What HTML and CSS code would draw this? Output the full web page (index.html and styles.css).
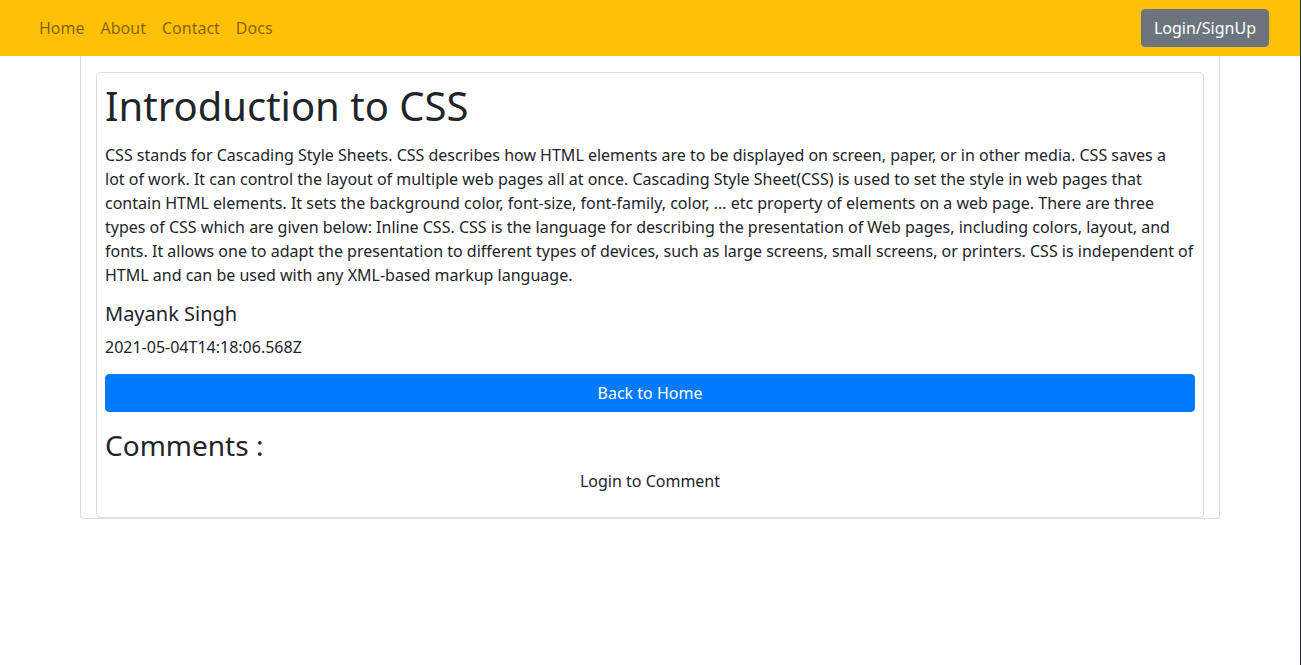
FILE: index.html
```html
<!DOCTYPE html>
<html lang="en">
<head>
<meta charset="utf-8">
<title>Introduction to CSS</title>
<link rel="stylesheet" href="styles.css">
</head>
<body>
<nav class="navbar">
  <ul class="nav-links">
    <li><a href="#">Home</a></li>
    <li><a href="#">About</a></li>
    <li><a href="#">Contact</a></li>
    <li><a href="#">Docs</a></li>
  </ul>
  <button class="btn-login">Login/SignUp</button>
</nav>
<main class="container">
  <article class="card">
    <h1 class="title">Introduction to CSS</h1>
    <p class="desc">CSS stands for Cascading Style Sheets. CSS describes how HTML elements are to be displayed on screen, paper, or in other media. CSS saves a<br>lot of work. It can control the layout of multiple web pages all at once. Cascading Style Sheet(CSS) is used to set the style in web pages that<br>contain HTML elements. It sets the background color, font-size, font-family, color, … etc property of elements on a web page. There are three<br>types of CSS which are given below: Inline CSS. CSS is the language for describing the presentation of Web pages, including colors, layout, and<br>fonts. It allows one to adapt the presentation to different types of devices, such as large screens, small screens, or printers. CSS is independent of<br>HTML and can be used with any XML-based markup language.</p>
    <h5 class="author">Mayank Singh</h5>
    <p class="date">2021-05-04T14:18:06.568Z</p>
    <a class="btn-home" href="#">Back to Home</a>
    <h3 class="comments">Comments :</h3>
    <p class="login-note">Login to Comment</p>
  </article>
</main>
</body>
</html>
```

FILE: styles.css
```css
html {
  border-right: 1px solid #2a2d33;
  background: #fff;
  box-sizing: border-box;
  min-height: 100%;
}
body {
  margin: 0;
  font-family: "Noto Sans", sans-serif;
  font-size: 16px;
  line-height: 1.5;
  color: #212529;
}
.navbar {
  background: #ffc107;
  height: 56px;
  box-sizing: border-box;
  padding: 0 31px 0 31px;
  display: flex;
  align-items: center;
  justify-content: space-between;
}
.nav-links {
  list-style: none;
  margin: 0;
  padding: 0;
  display: flex;
}
.nav-links a {
  display: block;
  padding: 8px;
  color: rgba(0, 0, 0, 0.5);
  text-decoration: none;
}
.btn-login {
  font: inherit;
  color: #fff;
  background: #6c757d;
  border: 1px solid #6c757d;
  border-radius: 4px;
  padding: 6px 12px;
  line-height: 1.5;
}
.container {
  width: 1140px;
  margin: 0 auto;
  box-sizing: border-box;
  border: 1px solid #dedede;
  border-top: none;
  border-radius: 0 0 4px 4px;
  padding: 16px 15px 0 15px;
}
.card {
  border: 1px solid #dedede;
  border-radius: 4px;
  padding: 9px 8px 16px 8px;
}
.desc {
  margin: 0 0 15px 0;
}
.title {
  font-size: 40px;
  font-weight: 400;
  line-height: 1.2;
  margin: 0 0 13px 0;
}
.author {
  font-size: 20px;
  font-weight: 400;
  line-height: 1.2;
  margin: 0 0 9px 0;
}
.date {
  margin: 0 0 15px 0;
}
.btn-home {
  display: block;
  text-align: center;
  background: #007bff;
  color: #fff;
  text-decoration: none;
  border-radius: 4px;
  padding: 6px 12px;
  line-height: 1.5;
  border: 1px solid #007bff;
}
.comments {
  font-size: 28px;
  font-weight: 400;
  line-height: 1.2;
  margin: 17px 0 6px 0;
}
.login-note {
  text-align: center;
  margin: 0 0 8px 0;
}
```
